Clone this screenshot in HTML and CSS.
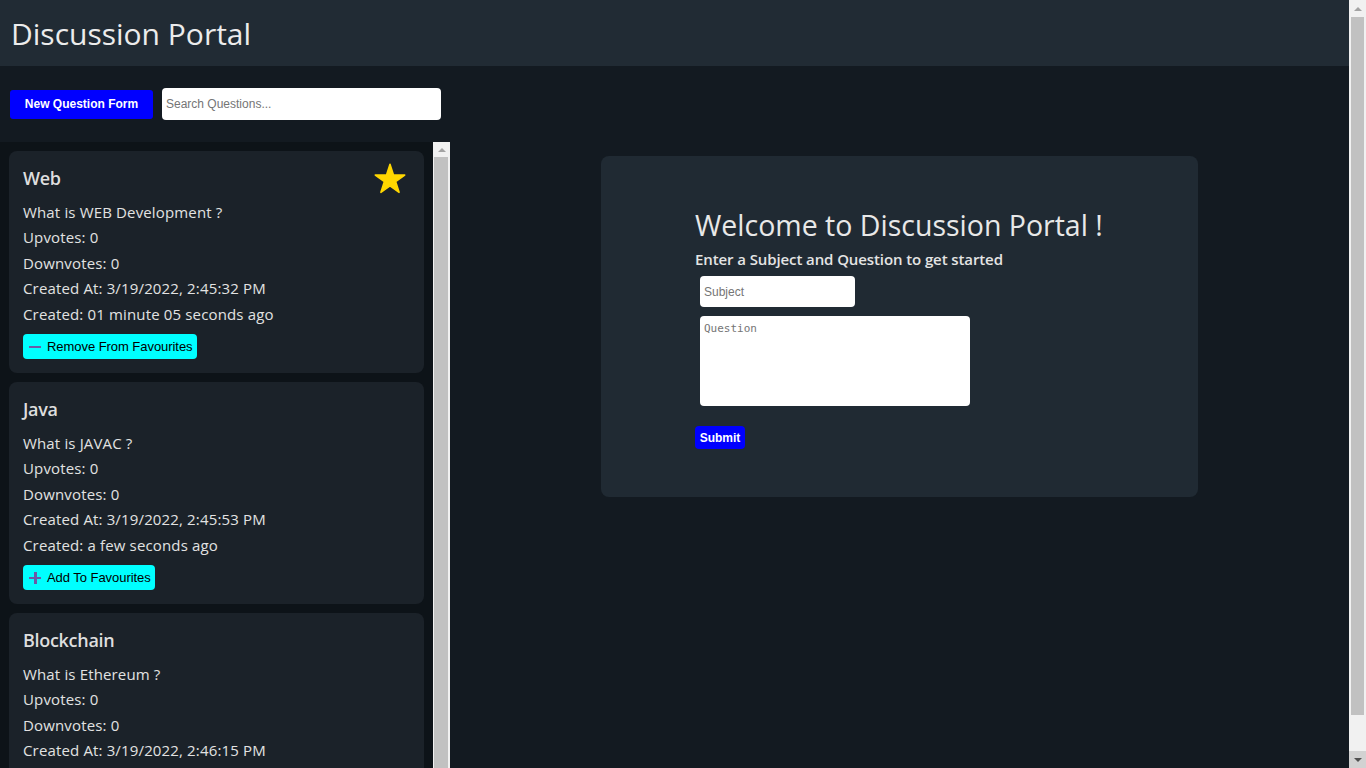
FILE: index.html
```html
<!DOCTYPE html>
<html lang="en">
<head>
<meta charset="utf-8">
<title>Discussion Portal</title>
<link rel="stylesheet" href="styles.css">
</head>
<body>
<div class="page">
  <header class="topbar">
    <h1 class="brand">Discussion Portal</h1>
  </header>
  <main class="layout">
    <aside class="sidebar">
      <div class="toolbar">
        <button class="btn-primary btn-new">New Question Form</button>
        <input class="search" type="text" placeholder="Search Questions...">
      </div>
      <div class="list-wrap">
        <div class="question-list">
          <article class="q-card">
            <div class="q-head">
              <h3 class="q-title">Web</h3>
              <svg class="star" viewBox="-0.5 -0.5 33 32" width="32" height="31"><path d="M16 0.8L19.6 11.9L31.2 11.9L21.8 18.7L25.4 29.8L16 23L6.6 29.8L10.2 18.7L0.8 11.9L12.4 11.9Z" fill="#ffd700" stroke="#ffd700" stroke-width="1.6" stroke-linejoin="round"/></svg>
            </div>
            <p class="q-line">What is WEB Development ?</p>
            <p class="q-line">Upvotes: 0</p>
            <p class="q-line">Downvotes: 0</p>
            <p class="q-line">Created At: 3/19/2022, 2:45:32 PM</p>
            <p class="q-line">Created: 01 minute 05 seconds ago</p>
            <button class="fav-btn"><span class="ico ico-minus"></span>Remove From Favourites</button>
          </article>
          <article class="q-card">
            <div class="q-head">
              <h3 class="q-title">Java</h3>
            </div>
            <p class="q-line">What is JAVAC ?</p>
            <p class="q-line">Upvotes: 0</p>
            <p class="q-line">Downvotes: 0</p>
            <p class="q-line">Created At: 3/19/2022, 2:45:53 PM</p>
            <p class="q-line">Created: a few seconds ago</p>
            <button class="fav-btn"><span class="ico ico-plus"></span>Add To Favourites</button>
          </article>
          <article class="q-card">
            <div class="q-head">
              <h3 class="q-title">Blockchain</h3>
            </div>
            <p class="q-line">What is Ethereum ?</p>
            <p class="q-line">Upvotes: 0</p>
            <p class="q-line">Downvotes: 0</p>
            <p class="q-line">Created At: 3/19/2022, 2:46:15 PM</p>
          </article>
        </div>
        <div class="scrollbar list-scrollbar">
          <div class="sb-btn"><span class="arrow-up"></span></div>
          <div class="sb-thumb"></div>
        </div>
      </div>
    </aside>
    <section class="content">
      <div class="welcome-card">
        <h2 class="welcome-title">Welcome to Discussion Portal !</h2>
        <p class="welcome-sub">Enter a Subject and Question to get started</p>
        <input class="subject" type="text" placeholder="Subject">
        <textarea class="question" placeholder="Question"></textarea>
        <button class="btn-primary btn-submit">Submit</button>
      </div>
    </section>
  </main>
</div>
<div class="scrollbar page-scrollbar">
  <div class="sb-btn"><span class="arrow-up"></span></div>
  <div class="sb-thumb"></div>
  <div class="sb-gap"></div>
  <div class="sb-btn sb-btn-active"><span class="arrow-down"></span></div>
</div>
</body>
</html>
```
FILE: styles.css
```css
* { box-sizing: border-box; }

html { background: #131a21; }

body {
  margin: 0;
  height: 768px;
  overflow: hidden;
  display: flex;
  background: #131a21;
  color: #e4e4e4;
  font-family: "Open Sans", "Noto Sans", sans-serif;
}

.page {
  flex: 1;
  min-width: 0;
  display: flex;
  flex-direction: column;
}

/* fake scrollbars (the screenshot shows classic scrollbars) */
.scrollbar {
  width: 17px;
  flex: none;
  background: #f1f1f1;
  display: flex;
  flex-direction: column;
}

.sb-btn {
  height: 17px;
  flex: none;
  display: flex;
  align-items: center;
  justify-content: center;
}

.sb-btn-active { background: #d2d2d2; }

.arrow-up {
  width: 0;
  height: 0;
  border-left: 4px solid transparent;
  border-right: 4px solid transparent;
  border-bottom: 4px solid #a3a3a3;
}

.arrow-down {
  width: 0;
  height: 0;
  border-left: 4px solid transparent;
  border-right: 4px solid transparent;
  border-top: 4px solid #505050;
}

.sb-thumb {
  margin: 0 2px;
  background: #c1c1c1;
}

.page-scrollbar .sb-thumb { height: 698px; flex: none; }
.page-scrollbar .sb-gap { flex: 1; }

.list-scrollbar .sb-btn { height: 15px; }
.list-scrollbar .sb-thumb { flex: 1; margin: 0 2px 0 1px; }

.topbar {
  height: 66px;
  flex: none;
  background: #212b34;
  display: flex;
  align-items: center;
  padding-left: 11px;
}

.brand {
  margin: 0;
  font-size: 30px;
  font-weight: 400;
  color: #ececec;
}

.layout {
  flex: 1;
  min-height: 0;
  display: flex;
}

.sidebar {
  width: 450px;
  flex: none;
  display: flex;
  flex-direction: column;
}

.toolbar {
  height: 76px;
  flex: none;
  display: flex;
  align-items: center;
  gap: 9px;
  padding-left: 10px;
}

.btn-primary {
  background: #0000ff;
  color: #ffffff;
  border: none;
  font-family: "Liberation Sans", Arial, sans-serif;
  font-weight: 700;
  font-size: 12px;
  cursor: pointer;
}

.btn-new {
  width: 143px;
  height: 29px;
  border-radius: 3px;
  padding: 0;
}

.search {
  width: 279px;
  height: 32px;
  border: none;
  border-radius: 4px;
  background: #ffffff;
  padding: 0 4px;
  font-family: "Liberation Sans", Arial, sans-serif;
  font-size: 12px;
  outline: none;
}

.search::placeholder,
.subject::placeholder { color: #757575; }

.list-wrap {
  flex: 1;
  min-height: 0;
  display: flex;
  background: #0d1318;
}

.question-list {
  width: 433px;
  flex: none;
  overflow: hidden;
  padding: 9px 0 0 9px;
}

.q-card {
  width: 415px;
  background: #1b2229;
  border-radius: 8px;
  padding: 14px;
  margin-bottom: 9px;
}

.q-head {
  display: flex;
  align-items: center;
  justify-content: space-between;
  height: 26px;
  margin-bottom: 9px;
}

.q-title {
  margin: 0;
  font-size: 18px;
  font-weight: 600;
  color: #dedede;
  letter-spacing: -0.3px;
}

.star {
  margin-right: 4px;
  margin-top: 1px;
}

.q-line {
  margin: 0;
  font-size: 15px;
  line-height: 25.4px;
  color: #e2e2e2;
  letter-spacing: 0.15px;
}

.fav-btn {
  margin-top: 7px;
  height: 25px;
  width: fit-content;
  display: flex;
  align-items: center;
  gap: 6px;
  background: #00ffff;
  border: none;
  border-radius: 4px;
  padding: 0 4px 0 6px;
  font-family: "Liberation Sans", Arial, sans-serif;
  font-size: 13px;
  letter-spacing: -0.05px;
  color: #000000;
  cursor: pointer;
}

.ico {
  width: 12px;
  height: 12px;
  position: relative;
  flex: none;
}

.ico::before,
.ico::after {
  content: "";
  position: absolute;
  background: #6a5aa8;
}

.ico-minus::before,
.ico-plus::before {
  left: 0;
  top: 5px;
  width: 12px;
  height: 2.5px;
}

.ico-plus::after {
  left: 5px;
  top: 0;
  width: 2.5px;
  height: 12px;
}

.ico-minus::after { display: none; }

.content {
  flex: 1;
  display: flex;
  justify-content: center;
  align-items: flex-start;
  padding-top: 90px;
}

.welcome-card {
  width: 597px;
  height: 341px;
  background: #202a33;
  border-radius: 8px;
  padding: 48px 60px 48px 94px;
}

.welcome-title {
  margin: 0;
  font-size: 28.5px;
  font-weight: 400;
  line-height: 42px;
  color: #e8e8e8;
  white-space: nowrap;
}

.welcome-sub {
  margin: 2px 0 6px;
  font-size: 15px;
  font-weight: 600;
  line-height: 22px;
  color: #e4e4e4;
  letter-spacing: -0.1px;
  white-space: nowrap;
}

.subject {
  display: block;
  margin-left: 5px;
  width: 155px;
  height: 31px;
  border: none;
  border-radius: 4px;
  padding: 0 4px;
  font-family: "Liberation Sans", Arial, sans-serif;
  font-size: 12px;
  outline: none;
}

.question {
  display: block;
  margin: 9px 0 0 5px;
  width: 270px;
  height: 90px;
  border: none;
  border-radius: 4px;
  padding: 6px 4px;
  resize: none;
  font-family: "DejaVu Sans Mono", monospace;
  font-size: 11px;
  outline: none;
}

.question::placeholder { color: #757575; }

.btn-submit {
  display: block;
  margin-top: 20px;
  width: 50px;
  height: 23px;
  border-radius: 4px;
  padding: 0;
}
```
